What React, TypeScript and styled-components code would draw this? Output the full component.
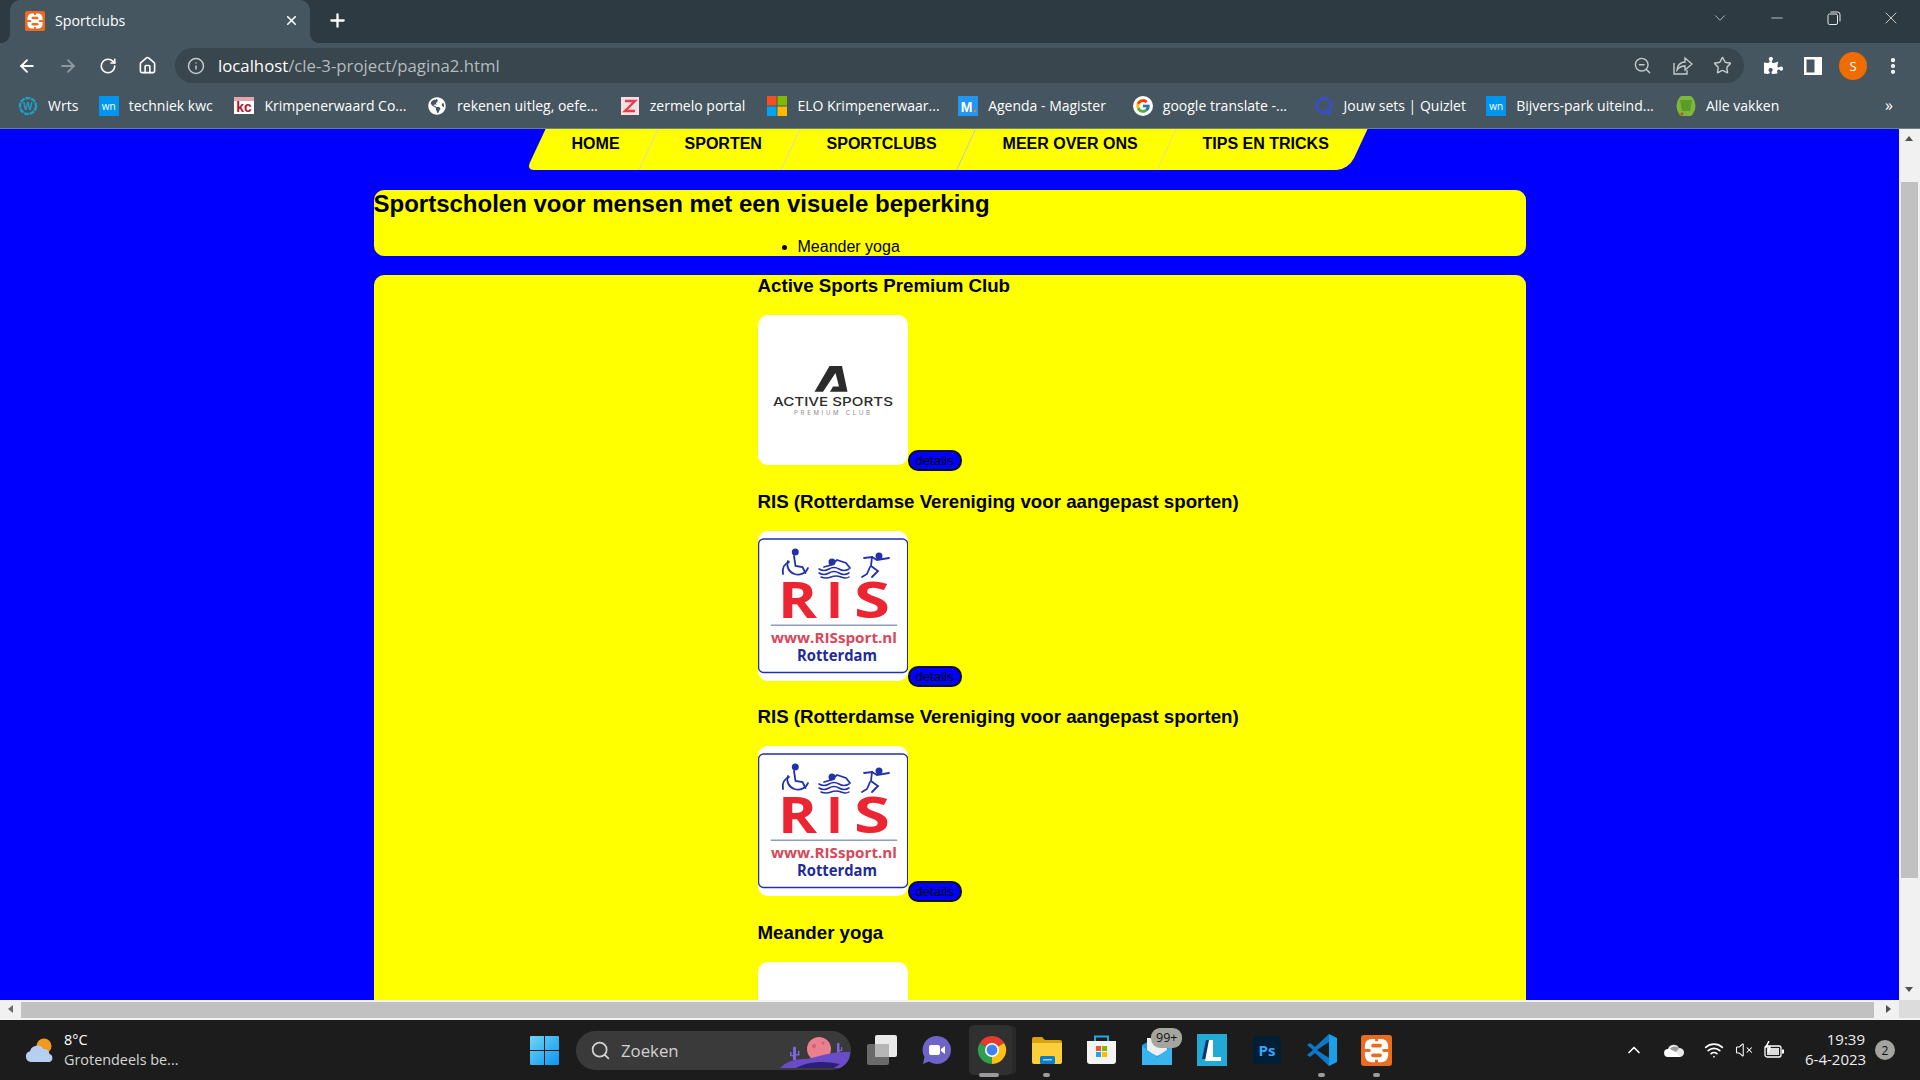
import React, {FC, ReactNode} from 'react';
import styled, {createGlobalStyle} from 'styled-components';
import {ArrowLeft, ArrowRight, RotateCw, House, Info, ZoomOut, Star, X, Plus, ChevronDown, Minus, ChevronUp, Wifi, VolumeX, EllipsisVertical, Search} from 'lucide-react';
import {FaGlobeAmericas, FaPuzzlePiece} from 'react-icons/fa';
import {FcGoogle} from 'react-icons/fc';

const GlobalStyle = createGlobalStyle`
  html, body {
    margin: 0;
    height: 100%;
    overflow: hidden;
    background: #1c1c1c;
  }
`;

const Screen = styled.div`
  display: flex;
  flex-direction: column;
  width: 1920px;
  height: 1080px;
  overflow: hidden;
  font-family: "Open Sans", "Noto Sans", sans-serif;
`;

/* ---------- browser chrome ---------- */

const TabStrip = styled.div`
  display: flex;
  flex: none;
  height: 43px;
  padding: 0 1px 0 10px;
  background: #2e3a41;
  color: #fff;
`;

const Tab = styled.div`
  position: relative;
  display: flex;
  align-items: center;
  width: 300px;
  padding: 0 11px 2px 15px;
  box-sizing: border-box;
  background: #455660;
  border-radius: 10px 10px 0 0;
  font-size: 14.2px;
  &::before, &::after {
    content: '';
    position: absolute;
    bottom: 0;
    width: 10px;
    height: 10px;
  }
  &::before {
    left: -10px;
    background: radial-gradient(circle at 0 0, transparent 10px, #455660 10.5px);
  }
  &::after {
    right: -10px;
    background: radial-gradient(circle at 100% 0, transparent 10px, #455660 10.5px);
  }
`;

const TabTitle = styled.span`
  flex: 1;
  margin-left: 10px;
`;

const Slot = styled.div<{$w: number; $h?: number}>`
  display: flex;
  flex: none;
  align-items: center;
  justify-content: center;
  width: ${(p) => p.$w}px;
  height: ${(p) => (p.$h ? `${p.$h}px` : 'auto')};
`;

const NewTab = styled(Slot)`
  margin-left: 10px;
  padding-bottom: 2px;
`;

const Grow = styled.div`
  flex: 1;
`;

const Toolbar = styled.div`
  display: flex;
  flex: none;
  align-items: flex-start;
  height: 40px;
  padding: 5px 7px 0;
  box-sizing: border-box;
  background: #455660;
  color: #fff;
`;

const ToolSlot = styled(Slot)`
  height: 35px;
`;

const Omnibox = styled.div`
  display: flex;
  flex: 1;
  align-items: center;
  height: 35px;
  margin: 0 9px 0 8px;
  padding: 0 2px 0 12px;
  background: #39464e;
  border-radius: 18px;
  color: #c4c9cc;
`;

const Address = styled.div`
  flex: 1;
  margin-left: 13px;
  font-size: 16.75px;
  color: #b4bbbf;
  b {
    font-weight: 400;
    color: #fff;
  }
`;

const Avatar = styled.div`
  display: flex;
  align-items: center;
  justify-content: center;
  width: 28px;
  height: 28px;
  border-radius: 50%;
  background: #ee6c00;
  font-size: 13px;
`;

const BookmarkBar = styled.div`
  display: flex;
  flex: none;
  align-items: center;
  height: 45px;
  padding: 0 0 0 18px;
  background: #455660;
  border-bottom: 1px solid #6f7f87;
  box-sizing: content-box;
  color: #fff;
`;

const Bookmark = styled.div`
  display: flex;
  align-items: center;
  margin-right: 20.7px;
`;

const BookmarkIcon = styled.div`
  display: flex;
  flex: none;
  align-items: center;
  justify-content: center;
  width: 20px;
  height: 20px;
  overflow: hidden;
`;

const WnIcon = styled(BookmarkIcon)`
  background: #0096f0;
  font-size: 10px;
`;

const BookmarkLabel = styled.span<{$w: number}>`
  width: ${(p) => p.$w}px;
  margin-left: 10px;
  font-size: 14px;
  white-space: nowrap;
`;

const MoreBookmarks = styled.div`
  position: absolute;
  left: 1885px;
  top: 94px;
  font-size: 16px;
  color: #fff;
`;

/* ---------- the page ---------- */

const Viewport = styled.div`
  display: flex;
  flex: none;
  height: 871px;
  overflow: hidden;
`;

const Page = styled.main`
  flex: 1;
  min-width: 0;
  overflow: hidden;
  background: #0000ff;
  color: #000;
  font-family: "Liberation Sans", Arial, sans-serif;
  font-size: 16px;
`;

const Nav = styled.ul`
  display: flex;
  justify-content: center;
  margin: 0 0 20px;
  padding: 0 4px 0 0;
  list-style: none;
`;

const NavItem = styled.li`
  margin-left: -1px;
  padding: 6px 32.5px 17px;
  background: #ffff00;
  border-left: 1px solid #d9d9c4;
  transform: skewX(-25deg);
  font-weight: 700;
  line-height: 18px;
  span {
    display: block;
    transform: skewX(25deg);
  }
  &:first-child {
    border-left: 0;
    border-bottom-left-radius: 7px;
  }
  &:last-child {
    border-bottom-right-radius: 12px;
  }
`;

const Panel = styled.section`
  width: 1152px;
  margin: 0 auto 19px;
  background: #ffff00;
  border-radius: 10px;
`;

const PanelTitle = styled.h2`
  margin: 0 0 21px;
  font-size: 24px;
  line-height: 27px;
`;

const ClubList = styled.ul`
  margin: 0 0 0 384px;
  padding: 0 0 0 40px;
  line-height: 18px;
`;

const ClubColumn = styled.div`
  padding-left: 384px;
`;

const ClubName = styled.h3`
  margin: 0 0 18.72px;
  font-size: 18.72px;
  line-height: 21.5px;
`;

const ClubRow = styled.div`
  margin-bottom: 19.3px;
`;

const Logo = styled.svg`
  width: 150px;
  height: 150px;
  background: #fff;
  border-radius: 10px;
`;

const Details = styled.button`
  width: 54px;
  height: 21px;
  padding: 0;
  background: #0000ff;
  border: 2px solid #111;
  border-radius: 10px;
  color: #000;
  font-family: "Liberation Sans", Arial, sans-serif;
  font-size: 13.33px;
`;

const VScroll = styled.div`
  position: relative;
  flex: none;
  width: 21px;
  background: #f1f1f1;
`;

const VThumb = styled.div`
  position: absolute;
  left: 2px;
  right: 2px;
  top: 53px;
  height: 696px;
  background: #c1c1c1;
`;

const ArrowUp = styled.div`
  position: absolute;
  left: 6px;
  top: 7px;
  border: 4.5px solid transparent;
  border-top: 0;
  border-bottom: 5px solid #505050;
`;

const ArrowDown = styled.div`
  position: absolute;
  left: 6px;
  bottom: 8px;
  border: 4.5px solid transparent;
  border-bottom: 0;
  border-top: 5px solid #505050;
`;

const HScroll = styled.div`
  display: flex;
  flex: none;
  align-items: stretch;
  height: 20px;
  box-sizing: border-box;
  padding-bottom: 1px;
  background: #f1f1f1;
  border-bottom: 1px solid #f4f4f4;
`;

const HArrowEnd = styled(Slot)`
  padding-left: 4px;
  box-sizing: border-box;
`;

const ArrowLeftTip = styled.div`
  border: 4.5px solid transparent;
  border-left: 0;
  border-right: 5px solid #6a6a6a;
`;

const ArrowRightTip = styled.div`
  border: 4.5px solid transparent;
  border-right: 0;
  border-left: 5px solid #505050;
`;

const HThumb = styled.div`
  width: 1853px;
  margin-top: 2px;
  background: #c1c1c1;
`;

const HCorner = styled.div`
  flex: 1;
  background: #dcdcdc;
`;

/* ---------- taskbar ---------- */

const Taskbar = styled.footer`
  display: flex;
  flex: 1;
  align-items: center;
  padding-right: 25px;
  background: #1c1c1c;
  color: #fff;
  font-family: "Open Sans", "Noto Sans", sans-serif;
`;

const Weather = styled.div`
  display: flex;
  flex: none;
  align-items: center;
  width: 520px;
  padding-left: 25px;
  box-sizing: border-box;
`;

const WeatherText = styled.div`
  margin-left: 9px;
  font-size: 14.4px;
  line-height: 20px;
  span {
    display: block;
    color: #d6d6d6;
  }
`;

const SearchPill = styled.div`
  position: relative;
  display: flex;
  flex: none;
  align-items: center;
  width: 275px;
  height: 39px;
  margin: 0 3px 0 8px;
  padding-left: 14px;
  box-sizing: border-box;
  background: #3a3a3a;
  border-radius: 20px;
  overflow: hidden;
  color: #d2d2d2;
  font-size: 16.8px;
`;

const SearchLabel = styled.span`
  margin-left: 10px;
`;

const SearchArt = styled.svg`
  position: absolute;
  right: 1px;
  bottom: 2px;
`;

const TaskIcon = styled.div`
  position: relative;
  display: flex;
  flex: none;
  align-items: center;
  justify-content: center;
  width: 55px;
  height: 60px;
  svg {
    position: relative;
  }
`;

const ActiveTile = styled.div`
  position: absolute;
  left: 5px;
  top: 5px;
  width: 43px;
  height: 50px;
  background: #303030;
  border-radius: 5px;
  box-shadow: 5px 0 0 -1px #292929;
`;

const RunDot = styled.div<{$active?: boolean}>`
  position: absolute;
  left: 50%;
  bottom: 3px;
  width: ${(p) => (p.$active ? 20 : 7)}px;
  height: 4px;
  margin-left: ${(p) => (p.$active ? -13 : -4)}px;
  background: #9b9b9b;
  border-radius: 2px;
`;

const MailBadge = styled.div`
  position: absolute;
  left: 22px;
  top: 8px;
  padding: 0 5px;
  background: #a5a5a0;
  border-radius: 9px;
  color: #111;
  font-size: 12.5px;
  line-height: 20px;
`;

const Clock = styled.div`
  flex: none;
  width: 60px;
  margin: -2px 10px 0 16px;
  text-align: right;
  font-size: 15px;
  line-height: 20px;
  white-space: nowrap;
  color: #eee;
`;

const CountBadge = styled.div`
  display: flex;
  flex: none;
  align-items: center;
  justify-content: center;
  width: 20px;
  height: 20px;
  border-radius: 50%;
  background: #a3a3a0;
  color: #111;
  font-size: 12px;
`;

/* ---------- drawings ---------- */

const XamppIcon: FC<{size: number}> = ({size}) => (
  <svg width={size} height={size} viewBox="0 0 32 32">
    <rect width="32" height="32" rx="3" fill="#e96c1f" />
    <rect x="4" y="4" width="24" height="24" rx="7" fill="#fff" />
    <rect x="10.5" y="9" width="11" height="4" rx="2" fill="#e96c1f" />
    <rect x="10.5" y="19" width="11" height="4" rx="2" fill="#e96c1f" />
    <rect x="3" y="14.5" width="7" height="3" rx="1.5" fill="#e96c1f" />
    <rect x="22" y="14.5" width="7" height="3" rx="1.5" fill="#e96c1f" />
    <rect x="14.500" y="3" width="3" height="3.500" fill="#e96c1f" />
    <rect x="14.500" y="25.500" width="3" height="3.500" fill="#e96c1f" />
  </svg>
);

const ShareIcon = () => (
  <svg width="21" height="21" viewBox="0 0 21 21" fill="none" stroke="currentColor" strokeWidth="1.4">
    <path d="M2 8v11h13v-4" />
    <path d="M5 15c0-5 4-8 8-8V3l7 6-7 6v-4c-3 0-6 1-8 4z" />
  </svg>
);

const SidePanelIcon = () => (
  <svg width="18" height="18" viewBox="0 0 18 18">
    <path fillRule="evenodd" fill="#fff" d="M0 0h18v18H0zM2.5 2.5v13h8v-13z" />
  </svg>
);

const RestoreIcon = () => (
  <svg width="14" height="14" viewBox="0 0 14 14" fill="none" stroke="#e8e8e8">
    <rect x="1" y="3" width="9.5" height="10.5" rx="1.5" />
    <path d="M3.5 1h7a2.5 2.5 0 0 1 2.5 2.5v7" />
  </svg>
);

const WrtsIcon = () => (
  <svg width="20" height="20" viewBox="0 0 20 20">
    <circle cx="10" cy="10" r="8" fill="none" stroke="#1f9fc4" strokeWidth="2.4" strokeDasharray="5 0.8" />
    <text x="10" y="13.5" textAnchor="middle" fontSize="10" fontWeight="700" fill="#1f9fc4" fontFamily="Liberation Sans">W</text>
  </svg>
);

const KcIcon = () => (
  <svg width="20" height="20" viewBox="0 0 20 20">
    <rect y="1" width="20" height="17" fill="#fff" />
    <rect y="1" width="20" height="4" fill="#c8324a" opacity=".45" />
    <text x="10" y="16" textAnchor="middle" fontSize="14" fontWeight="700" fill="#b4152f" fontFamily="Liberation Sans">kc</text>
  </svg>
);

const ZermeloIcon = () => (
  <svg width="20" height="20" viewBox="0 0 20 20">
    <rect x="1" y="1" width="18" height="18" fill="#f6dfe2" />
    <path d="M5 5h10L5 15h10" fill="none" stroke="#e2404f" strokeWidth="2.4" />
  </svg>
);

const MicrosoftIcon = () => (
  <svg width="20" height="20" viewBox="0 0 20 20">
    <rect width="9.5" height="9.5" fill="#f25022" />
    <rect x="10.5" width="9.5" height="9.5" fill="#7fba00" />
    <rect y="10.5" width="9.5" height="9.5" fill="#00a4ef" />
    <rect x="10.5" y="10.5" width="9.5" height="9.5" fill="#ffb900" />
  </svg>
);

const MagisterIcon = () => (
  <svg width="20" height="20" viewBox="0 0 20 20">
    <rect width="20" height="20" fill="#2196f3" />
    <text x="8.5" y="15.5" textAnchor="middle" fontSize="14" fontWeight="700" fill="#fff" fontFamily="Liberation Sans">M</text>
    <circle cx="17" cy="15" r="1.3" fill="#f57c00" />
  </svg>
);

const GoogleWrap = styled(BookmarkIcon)`
  background: #fff;
  border-radius: 50%;
`;

const QuizletIcon = () => (
  <svg width="20" height="20" viewBox="0 0 20 20" fill="none" stroke="#3b4fb8" strokeWidth="3.4">
    <circle cx="10" cy="9.5" r="7.2" />
    <path d="M11 12l6 7" />
  </svg>
);

const BallIcon = () => (
  <svg width="20" height="24" viewBox="0 0 20 24">
    <ellipse cx="10" cy="12" rx="9.5" ry="11.5" fill="#7cb83a" />
    <path d="M4 6h12l-2 11H6z" fill="#5c9a2a" />
    <circle cx="6" cy="20" r="1.4" fill="#c8452f" />
  </svg>
);

const ActiveLogo = () => (
  <Logo viewBox="0 0 150 150">
    <path d="M56.5 76.7 71.500 51H84l5.500 25.700H72l3-5.200h6L77.500 58 65 76.700z" fill="#2b2b2b" />
    <text x="75" y="90.500" textAnchor="middle" fontFamily="Inter, sans-serif" fontWeight="500" fontSize="12" fill="#2b2b2b" textLength="120" lengthAdjust="spacingAndGlyphs">ACTIVE SPORTS</text>
    <text x="74" y="99.500" textAnchor="middle" fontFamily="Inter, sans-serif" fontSize="6" fill="#8a8a8a" textLength="76">PREMIUM CLUB</text>
  </Logo>
);

const RisLogo = () => (
  <Logo viewBox="0 0 150 150">
    <rect x="0.6" y="8" width="149" height="133.5" rx="5" fill="#fff" stroke="#2231a8" strokeWidth="1.3" />
    <g fill="none" stroke="#2231a8" strokeWidth="1.800" strokeLinecap="round">
      <circle cx="37.300" cy="21" r="2.600" fill="#2231a8" />
      <path d="M36 25l1.500 10 7 1 3 6" />
      <path d="M30 30A10 9.500 0 1 0 50 37" />
      <path d="M25 43c-1-6 1-10 6-12" />
      <circle cx="74" cy="31" r="2.600" fill="#2231a8" />
      <path d="M66 36l7-2 6-5 9 3 4 5" />
      <path d="M61 38q5 3 10 0t10 0 10 0" strokeWidth="1.500" />
      <path d="M61 42q5 3 10 0t10 0 10 0" strokeWidth="1.500" />
      <path d="M63 46q5 2 10 0t10 0 8 0" strokeWidth="1.500" />
      <circle cx="121" cy="25" r="2.600" fill="#2231a8" />
      <path d="M106 27l8-1-1 9 7 5-6 6" />
      <path d="M114 26l5 3 12-2" />
      <path d="M112 36l-3 7-5 3" />
    </g>
    <g fontFamily="'Open Sans', sans-serif" fontWeight="700" fontSize="50" fill="#ec2532">
      <text x="20" y="87" textLength="39" lengthAdjust="spacingAndGlyphs">R</text>
      <text x="68" y="87" textLength="17" lengthAdjust="spacingAndGlyphs">I</text>
      <text x="96" y="87" textLength="36" lengthAdjust="spacingAndGlyphs">S</text>
    </g>
    <rect x="12.7" y="93.5" width="126.5" height="1.5" fill="#8f9cc0" />
    <text x="76" y="112" textAnchor="middle" fontFamily="'Open Sans', sans-serif" fontWeight="700" fontSize="15" fill="#d8485a" textLength="126" lengthAdjust="spacingAndGlyphs">www.RISsport.nl</text>
    <text x="79" y="130" textAnchor="middle" fontFamily="'Open Sans', sans-serif" fontWeight="700" fontSize="16" fill="#1e2a9a" textLength="80" lengthAdjust="spacingAndGlyphs">Rotterdam</text>
  </Logo>
);

const BlankLogo = styled.div`
  width: 150px;
  height: 150px;
  background: #fff;
  border-radius: 10px;
`;

const WeatherIcon = () => (
  <svg width="30" height="32" viewBox="0 0 30 32">
    <circle cx="19" cy="12" r="7.5" fill="#f09a1f" />
    <path d="M6 28a5.5 5.5 0 0 1-1-10.800A7.500 7.500 0 0 1 18.500 15a5.500 5.500 0 0 1 6 5 4.200 4.200 0 0 1 0 8z" fill="#b6cff0" />
  </svg>
);

const WindowsIcon = () => (
  <svg width="29" height="29" viewBox="0 0 29 29">
    <defs>
      <linearGradient id="win" x1="0" y1="0" x2="1" y2="1">
        <stop offset="0" stopColor="#6fd6f6" />
        <stop offset="1" stopColor="#0a96f0" />
      </linearGradient>
    </defs>
    <path fill="url(#win)" d="M0 1a1 1 0 0 1 1-1h13v14H0zM15 0h13a1 1 0 0 1 1 1v13H15zM0 15h14v14H1a1 1 0 0 1-1-1zM15 15h14v13a1 1 0 0 1-1 1H15z" />
  </svg>
);

const SearchArtwork = () => (
  <SearchArt width="72" height="32" viewBox="0 0 72 32">
    <circle cx="41" cy="13" r="12" fill="#ea7f8e" />
    <circle cx="36" cy="10" r="2" fill="#d0626f" />
    <circle cx="45" cy="7" r="1.500" fill="#d0626f" />
    <path d="M15 24V12a1.500 1.500 0 0 1 3 0v12zM12 20v-4h1.500v3H15v1.500zM18 18h2v-3h1.500v4.500H18z" fill="#7a68d8" />
    <path d="M59 18V8a1.200 1.200 0 0 1 2.500 0v10zM61 14h2v-3h1.200v4H61z" fill="#7a68d8" />
    <path d="M2 32c6-6 14-9 24-9s24-8 46-7c0 6-2 14-10 16z" fill="#6a4bc8" />
    <path d="M18 32c10-6 26-8 44-4l-6 4z" fill="#2d1f78" />
  </SearchArt>
);

const TaskViewIcon = () => (
  <svg width="30" height="30" viewBox="0 0 30 30">
    <rect x="8" width="22" height="22" rx="2" fill="#e9e9e9" />
    <rect y="9" width="22" height="21" rx="2" fill="#6a6a6a" />
    <rect x="8" y="9" width="14" height="13" fill="#b6b6b6" />
  </svg>
);

const ChatIcon = () => (
  <svg width="30" height="30" viewBox="0 0 30 30">
    <path d="M15 1a14 14 0 1 1-8 25.500L1 29l1.500-7A14 14 0 0 1 15 1z" fill="#6e64c8" />
    <rect x="7" y="10" width="11" height="10" rx="2" fill="#fff" />
    <path d="M19 14l4-3v8l-4-3z" fill="#fff" />
  </svg>
);

const ChromeIcon = () => (
  <svg width="30" height="30" viewBox="0 0 32 32">
    <path d="M16 16 3 8.500A15 15 0 0 1 29 8.500z" fill="#e33b2e" />
    <path d="M16 16 29 8.500A15 15 0 0 1 16 31z" fill="#fbc116" />
    <path d="M16 16 16 31A15 15 0 0 1 3 8.500z" fill="#2f9e4f" />
    <circle cx="16" cy="16" r="7.500" fill="#fff" />
    <circle cx="16" cy="16" r="5.800" fill="#3f82f0" />
  </svg>
);

const FolderIcon = () => (
  <svg width="30" height="28" viewBox="0 0 30 28">
    <path d="M0 3a2 2 0 0 1 2-2h8l3 3h15a2 2 0 0 1 2 2v4H0z" fill="#d9a20b" />
    <path d="M0 7h30v19a2 2 0 0 1-2 2H2a2 2 0 0 1-2-2z" fill="#fbcf3c" />
    <rect x="8" y="20" width="15" height="8" rx="1.500" fill="#0f7cc8" />
    <rect x="11" y="23" width="9" height="1.500" fill="#8fd0f5" />
  </svg>
);

const StoreIcon = () => (
  <svg width="29" height="30" viewBox="0 0 29 30">
    <path d="M8 6V1.500h13V6" fill="none" stroke="#25a5e0" strokeWidth="2" />
    <path d="M0 6h29v20a3 3 0 0 1-3 3H3a3 3 0 0 1-3-3z" fill="#f4f4f4" />
    <rect x="9" y="11" width="5" height="5" fill="#f0562a" />
    <rect x="15" y="11" width="5" height="5" fill="#7fba00" />
    <rect x="9" y="17" width="5" height="5" fill="#20a4ee" />
    <rect x="15" y="17" width="5" height="5" fill="#ffb900" />
  </svg>
);

const MailIcon = () => (
  <svg width="30" height="30" viewBox="0 0 30 30">
    <path d="M0 10 15 2l15 8v20H0z" fill="#1b9be0" />
    <path d="M5 3h20v13L15 21 5 16z" fill="#efefef" />
    <path d="M0 11l15 11 15-11v19H0z" fill="#39b4ef" />
  </svg>
);

const LIcon = () => (
  <svg width="30" height="32" viewBox="0 0 30 32">
    <rect width="30" height="32" fill="#22a9d6" />
    <path d="M9 6h6l-1 19h-9z" fill="#14306f" />
    <path d="M12 6h4v17h8v4H8z" fill="#fff" />
  </svg>
);

const PsIcon = () => (
  <svg width="28" height="28" viewBox="0 0 28 28">
    <rect width="28" height="28" rx="4" fill="#001e36" />
    <text x="14" y="20" textAnchor="middle" fontFamily="'Open Sans', sans-serif" fontWeight="700" fontSize="15" fill="#31a8ff">Ps</text>
  </svg>
);

const VsCodeIcon = () => (
  <svg width="30" height="32" viewBox="0 0 30 32">
    <path d="M22 0l8 4v24l-8 4V0z" fill="#1d9fe6" />
    <path d="M22 0v8L10 16l12 8v8L8 19l-5 4-3-2 6-5-6-5 3-2 5 4z" fill="#0b78c8" />
  </svg>
);

const CloudIcon = () => (
  <svg width="20" height="14" viewBox="0 0 20 14">
    <path d="M4 14a4 4 0 0 1 0-8 6 6 0 0 1 11-1 4.500 4.500 0 0 1 1 9z" fill="#e8e8e8" />
    <path d="M6 6l6 3 4 5H4a4 4 0 0 1 2-8z" fill="#fff" />
    <path d="M6 6a6 6 0 0 1 9-1l-3 4z" fill="#9a9a9a" />
  </svg>
);

const BatteryIcon = () => (
  <svg width="21" height="18" viewBox="0 0 21 18" fill="none" stroke="#fff" strokeWidth="1.300">
    <rect x="1" y="5" width="16" height="11" rx="2" />
    <rect x="3" y="7" width="12" height="7" fill="#fff" stroke="none" opacity=".85" />
    <path d="M19 8.500v4" strokeWidth="2" />
    <path d="M5 0 2 6h4l-2 5" strokeWidth="1.500" />
  </svg>
);

/* ---------- data ---------- */

interface BookmarkData {
  icon: ReactNode;
  label: string;
  width: number;
}

const bookmarks: BookmarkData[] = [
  {icon: <WrtsIcon />, label: 'Wrts', width: 30},
  {icon: <WnIcon>wn</WnIcon>, label: 'techniek kwc', width: 85},
  {icon: <KcIcon />, label: 'Krimpenerwaard Co...', width: 142},
  {icon: <FaGlobeAmericas size={18} color="#fff" />, label: 'rekenen uitleg, oefe...', width: 142},
  {icon: <ZermeloIcon />, label: 'zermelo portal', width: 97},
  {icon: <MicrosoftIcon />, label: 'ELO Krimpenerwaar...', width: 140},
  {icon: <MagisterIcon />, label: 'Agenda - Magister', width: 124},
  {icon: <GoogleWrap><FcGoogle size={16} /></GoogleWrap>, label: 'google translate -...', width: 130},
  {icon: <QuizletIcon />, label: 'Jouw sets | Quizlet', width: 122},
  {icon: <WnIcon>wn</WnIcon>, label: 'Bijvers-park uiteind...', width: 139},
  {icon: <BallIcon />, label: 'Alle vakken', width: 75},
];

const navItems = ['HOME', 'SPORTEN', 'SPORTCLUBS', 'MEER OVER ONS', 'TIPS EN TRICKS'];

const risName = 'RIS (Rotterdamse Vereniging voor aangepast sporten)';

const App: FC = () => (
  <Screen>
    <GlobalStyle />
    <TabStrip>
      <Tab>
        <XamppIcon size={20} />
        <TabTitle>Sportclubs</TabTitle>
        <X size={15} strokeWidth={2.6} />
      </Tab>
      <NewTab $w={34}>
        <Plus size={21} strokeWidth={2.6} />
      </NewTab>
      <Grow />
      <Slot $w={56} $h={36}><ChevronDown size={18} strokeWidth={1} color="#d8d8d8" /></Slot>
      <Slot $w={57} $h={36}><Minus size={18} strokeWidth={1} color="#e8e8e8" /></Slot>
      <Slot $w={57} $h={36}><RestoreIcon /></Slot>
      <Slot $w={57} $h={36}><X size={20} strokeWidth={1} color="#e8e8e8" /></Slot>
    </TabStrip>

    <Toolbar>
      <ToolSlot $w={40}><ArrowLeft size={20} strokeWidth={2.2} /></ToolSlot>
      <ToolSlot $w={42}><ArrowRight size={20} strokeWidth={2.2} color="#8d9aa1" /></ToolSlot>
      <ToolSlot $w={38}><RotateCw size={18} strokeWidth={2.2} /></ToolSlot>
      <ToolSlot $w={40}><House size={19} strokeWidth={2} /></ToolSlot>
      <Omnibox>
        <Info size={18} strokeWidth={2} />
        <Address><b>localhost</b>/cle-3-project/pagina2.html</Address>
        <ToolSlot $w={40}><ZoomOut size={19} strokeWidth={1.8} /></ToolSlot>
        <ToolSlot $w={40}><ShareIcon /></ToolSlot>
        <ToolSlot $w={40}><Star size={19} strokeWidth={1.8} /></ToolSlot>
      </Omnibox>
      <ToolSlot $w={40}><FaPuzzlePiece size={19} /></ToolSlot>
      <ToolSlot $w={40}><SidePanelIcon /></ToolSlot>
      <ToolSlot $w={40}><Avatar>S</Avatar></ToolSlot>
      <ToolSlot $w={40}><EllipsisVertical size={20} strokeWidth={3} /></ToolSlot>
    </Toolbar>

    <BookmarkBar>
      {bookmarks.map((b) => (
        <Bookmark key={b.label}>
          <BookmarkIcon>{b.icon}</BookmarkIcon>
          <BookmarkLabel $w={b.width}>{b.label}</BookmarkLabel>
        </Bookmark>
      ))}
      <MoreBookmarks>»</MoreBookmarks>
    </BookmarkBar>

    <Viewport>
      <Page>
        <Nav>
          {navItems.map((item) => (
            <NavItem key={item}><span>{item}</span></NavItem>
          ))}
        </Nav>
        <Panel>
          <PanelTitle>Sportscholen voor mensen met een visuele beperking</PanelTitle>
          <ClubList>
            <li>Meander yoga</li>
          </ClubList>
        </Panel>
        <Panel>
          <ClubColumn>
            <ClubName>Active Sports Premium Club</ClubName>
            <ClubRow><ActiveLogo /><Details>details</Details></ClubRow>
            <ClubName>{risName}</ClubName>
            <ClubRow><RisLogo /><Details>details</Details></ClubRow>
            <ClubName>{risName}</ClubName>
            <ClubRow><RisLogo /><Details>details</Details></ClubRow>
            <ClubName>Meander yoga</ClubName>
            <BlankLogo />
          </ClubColumn>
        </Panel>
      </Page>
      <VScroll>
        <ArrowUp />
        <VThumb />
        <ArrowDown />
      </VScroll>
    </Viewport>

    <HScroll>
      <Slot $w={21}><ArrowLeftTip /></Slot>
      <HThumb />
      <HArrowEnd $w={25}><ArrowRightTip /></HArrowEnd>
      <HCorner />
    </HScroll>

    <Taskbar>
      <Weather>
        <WeatherIcon />
        <WeatherText>8°C<span>Grotendeels be...</span></WeatherText>
      </Weather>
      <Slot $w={48}><WindowsIcon /></Slot>
      <SearchPill>
        <Search size={21} strokeWidth={2} />
        <SearchLabel>Zoeken</SearchLabel>
        <SearchArtwork />
      </SearchPill>
      <TaskIcon><TaskViewIcon /></TaskIcon>
      <TaskIcon><ChatIcon /></TaskIcon>
      <TaskIcon><ActiveTile /><ChromeIcon /><RunDot $active /></TaskIcon>
      <TaskIcon><FolderIcon /><RunDot /></TaskIcon>
      <TaskIcon><StoreIcon /></TaskIcon>
      <TaskIcon><MailIcon /><MailBadge>99+</MailBadge></TaskIcon>
      <TaskIcon><LIcon /></TaskIcon>
      <TaskIcon><PsIcon /></TaskIcon>
      <TaskIcon><VsCodeIcon /><RunDot /></TaskIcon>
      <TaskIcon><XamppIcon size={31} /><RunDot /></TaskIcon>
      <Grow />
      <Slot $w={30}><ChevronUp size={20} strokeWidth={2} /></Slot>
      <Slot $w={50}><CloudIcon /></Slot>
      <Slot $w={30}><Wifi size={20} strokeWidth={2} /></Slot>
      <Slot $w={30}><VolumeX size={18} strokeWidth={1.4} /></Slot>
      <Slot $w={30}><BatteryIcon /></Slot>
      <Clock>19:39<br />6-4-2023</Clock>
      <CountBadge>2</CountBadge>
    </Taskbar>
  </Screen>
);

export default App;
